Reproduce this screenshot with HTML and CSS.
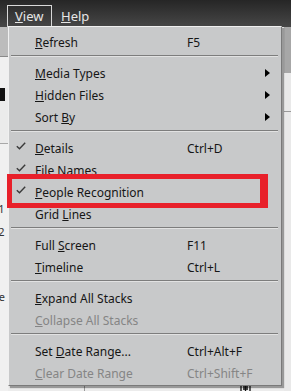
FILE: index.html
```html
<!DOCTYPE html>
<html>
<head>
<meta charset="utf-8">
<link rel="stylesheet" href="styles.css">
</head>
<body>
<div class="app">
  <div class="menubar">
    <span class="mb-item active"><u>V</u>iew</span>
    <span class="mb-item"><u>H</u>elp</span>
  </div>
  <div class="workspace">
    <div class="left-pane">
      <div class="lp-top"></div>
      <div class="lp-row"><span class="lp-icon"></span></div>
      <div class="lp-text t1">01</div>
      <div class="lp-text t2">02</div>
      <div class="lp-text t3">ge</div>
    </div>
    <div class="center-pane">
      <svg class="bg-icon" width="11" height="8" viewBox="0 0 11 8"><path d="M0 1 H11 M1 1 V8 M10 1 V8 M3 3 H8 M5.5 1 V8 M3 5 H8" stroke="#111" stroke-width="1.3" fill="none"/></svg>
      <span class="bg-line"></span>
    </div>
    <div class="right-pane">
      <div class="rp-top"></div>
      <div class="rp-row"></div>
    </div>
  </div>

  <div class="menu">
    <div class="item"><span class="chk"></span><span class="lbl"><u>R</u>efresh</span><span class="key">F5</span><span class="arr"></span></div>
    <div class="sep"></div>
    <div class="item"><span class="chk"></span><span class="lbl"><u>M</u>edia Types</span><span class="key"></span><span class="arr"><svg width="5" height="8" viewBox="0 0 5 8"><path d="M0 0 L5 4 L0 8 Z" fill="#000"/></svg></span></div>
    <div class="item"><span class="chk"></span><span class="lbl"><u>H</u>idden Files</span><span class="key"></span><span class="arr"><svg width="5" height="8" viewBox="0 0 5 8"><path d="M0 0 L5 4 L0 8 Z" fill="#000"/></svg></span></div>
    <div class="item"><span class="chk"></span><span class="lbl">Sort <u>B</u>y</span><span class="key"></span><span class="arr"><svg width="5" height="8" viewBox="0 0 5 8"><path d="M0 0 L5 4 L0 8 Z" fill="#000"/></svg></span></div>
    <div class="sep"></div>
    <div class="item"><span class="chk"><svg width="10" height="8" viewBox="0 0 10 8"><path d="M0.8 4.2 L3.5 6.8 L9.2 0.8" fill="none" stroke="#3a3a3a" stroke-width="1.4"/></svg></span><span class="lbl"><u>D</u>etails</span><span class="key">Ctrl+D</span><span class="arr"></span></div>
    <div class="item"><span class="chk"><svg width="10" height="8" viewBox="0 0 10 8"><path d="M0.8 4.2 L3.5 6.8 L9.2 0.8" fill="none" stroke="#3a3a3a" stroke-width="1.4"/></svg></span><span class="lbl"><u>F</u>ile Names</span><span class="key"></span><span class="arr"></span></div>
    <div class="item highlight"><span class="chk"><svg width="10" height="8" viewBox="0 0 10 8"><path d="M0.8 4.2 L3.5 6.8 L9.2 0.8" fill="none" stroke="#3a3a3a" stroke-width="1.4"/></svg></span><span class="lbl"><u>P</u>eople Recognition</span><span class="key"></span><span class="arr"></span></div>
    <div class="item"><span class="chk"></span><span class="lbl">Grid <u>L</u>ines</span><span class="key"></span><span class="arr"></span></div>
    <div class="sep"></div>
    <div class="item"><span class="chk"></span><span class="lbl">Full <u>S</u>creen</span><span class="key">F11</span><span class="arr"></span></div>
    <div class="item"><span class="chk"></span><span class="lbl"><u>T</u>imeline</span><span class="key">Ctrl+L</span><span class="arr"></span></div>
    <div class="sep"></div>
    <div class="item"><span class="chk"></span><span class="lbl"><u>E</u>xpand All Stacks</span><span class="key"></span><span class="arr"></span></div>
    <div class="item disabled"><span class="chk"></span><span class="lbl"><u>C</u>ollapse All Stacks</span><span class="key"></span><span class="arr"></span></div>
    <div class="sep"></div>
    <div class="item"><span class="chk"></span><span class="lbl">Set <u>D</u>ate Range...</span><span class="key">Ctrl+Alt+F</span><span class="arr"></span></div>
    <div class="item disabled"><span class="chk"></span><span class="lbl"><u>C</u>lear Date Range</span><span class="key">Ctrl+Shift+F</span><span class="arr"></span></div>
  </div>
</div>
</body>
</html>
```
FILE: styles.css
```css
html, body {
  margin: 0;
  padding: 0;
}
body {
  width: 291px;
  height: 391px;
  overflow: hidden;
  font-family: "Noto Sans", "DejaVu Sans", sans-serif;
  font-size: 12px;
  background: #ececec;
}
.app {
  position: relative;
  width: 291px;
  height: 391px;
  display: flex;
  flex-direction: column;
  overflow: hidden;
}
.menubar {
  height: 27px;
  flex: none;
  background: linear-gradient(#262626, #474747);
  display: flex;
  align-items: flex-end;
  padding-left: 7px;
  box-sizing: border-box;
}
.mb-item {
  color: #e6e6e6;
  font-size: 13px;
  height: 22px;
  line-height: 20px;
  padding: 0 8px;
  box-sizing: border-box;
  border: 1px solid transparent;
  border-bottom: none;
}
.mb-item.active {
  border-color: #d8d8d8;
  width: 45px;
  padding-left: 7px;
}
.workspace {
  flex: 1;
  display: flex;
}
.left-pane {
  width: 8px;
  position: relative;
  background: #f0f0f0;
  overflow: hidden;
}
.lp-top {
  height: 29px;
  background: #bcbcbc;
  border-bottom: 1px solid #8a8a8a;
}
.lp-row {
  height: 55px;
  border-bottom: 1px solid #a8a8a8;
  background: #ebebeb;
}
.lp-icon {
  display: block;
  width: 5px;
  height: 13px;
  background: #111;
  margin-top: 31px;
}
.lp-text {
  position: absolute;
  left: -8px;
  width: 16px;
  font-size: 11px;
  line-height: 13px;
  color: #333;
  white-space: nowrap;
}
.t1 { top: 175px; }
.t2 { top: 198px; }
.t3 { top: 263px; }
.center-pane {
  flex: 1;
  position: relative;
}
.bg-icon {
  position: absolute;
  left: 232px;
  top: 357px;
}
.bg-line {
  position: absolute;
  left: 76px;
  top: 350px;
  width: 1px;
  height: 20px;
  background: #9a9a9a;
}
.right-pane {
  width: 7px;
  background: #e9e9e9;
}
.rp-top {
  height: 46px;
  background: #a7a7a7;
}
.rp-row {
  height: 38px;
  border-bottom: 1px solid #9a9a9a;
}
.menu {
  position: absolute;
  left: 8px;
  top: 26px;
  width: 274px;
  box-sizing: border-box;
  background: #c8c9ca;
  border: 1px solid #f0f0f0;
  border-right-color: #7a7a7a;
  border-bottom-color: #7a7a7a;
  box-shadow: 2px 2px 1px rgba(0,0,0,0.35);
  padding: 4px 0 1px 0;
  color: #161616;
}
.item {
  height: 22px;
  display: flex;
  align-items: center;
  position: relative;
}
.chk {
  width: 26px;
  padding-left: 7px;
  box-sizing: border-box;
  display: flex;
  align-items: center;
  height: 22px;
  padding-bottom: 4px;
}
.lbl {
  width: 152px;
  white-space: nowrap;
}
.key {
  flex: 1;
  white-space: nowrap;
}
.arr {
  width: 16px;
  display: flex;
  align-items: center;
}
.disabled { color: #858585; }
.sep {
  height: 1px;
  background: #7d7d7d;
  border-bottom: 1px solid #e2e2e2;
  margin: 2px 3px 5px 2px;
}
.highlight::after {
  content: "";
  position: absolute;
  left: -2px;
  top: -7px;
  width: 261px;
  height: 34px;
  box-sizing: border-box;
  border: 5px solid #e8202a;
  border-right-width: 8px;
}
```
